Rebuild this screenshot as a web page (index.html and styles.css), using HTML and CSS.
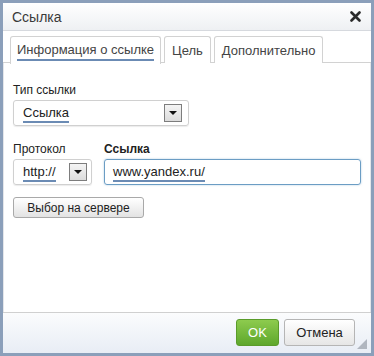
FILE: index.html
```html
<!DOCTYPE html>
<html>
<head>
<meta charset="utf-8">
<link rel="stylesheet" href="styles.css">
</head>
<body>
<div class="dialog">
  <div class="titlebar">
    <span class="title">Ссылка</span>
    <svg class="close" width="11" height="11" viewBox="0 0 11 11"><path d="M1.5 1.5L9.5 9.5M9.5 1.5L1.5 9.5" stroke="#2b2b2b" stroke-width="2.6" stroke-linecap="round"/></svg>
  </div>
  <div class="tabs">
    <div class="tab active"><span class="u">Информация о ссылке</span></div>
    <div class="tab">Цель</div>
    <div class="tab">Дополнительно</div>
  </div>
  <div class="content">
    <div class="field">
      <div class="label">Тип ссылки</div>
      <div class="select wide"><span class="u">Ссылка</span><span class="arrow"></span></div>
    </div>
    <div class="row">
      <div class="field">
        <div class="label">Протокол</div>
        <div class="select proto"><span class="u">http://</span><span class="arrow"></span></div>
      </div>
      <div class="field grow">
        <div class="label bold">Ссылка</div>
        <div class="input"><span class="u">www.yandex.ru/</span></div>
      </div>
    </div>
    <div class="btn">Выбор на сервере</div>
  </div>
  <div class="footer">
    <div class="ok">OK</div>
    <div class="cancel">Отмена</div>
    <span class="grip"></span>
  </div>
</div>
</body>
</html>
```
FILE: styles.css
```css
* { box-sizing: border-box; }
html, body { margin: 0; padding: 0; background: #fff; }
body { font-family: "Liberation Sans", Arial, sans-serif; color: #222; }
.dialog {
  width: 374px; height: 356px;
  border: 3px solid #8b9fba;
  display: flex; flex-direction: column;
  background: #fff;
}
.titlebar {
  height: 28px;
  display: flex; align-items: center; justify-content: space-between;
  padding: 0 10px 0 9px;
  background: linear-gradient(#ffffff, #eef0f3);
  border-bottom: 1px solid #d6d9de;
}
.title { font-size: 14px; color: #3a3a3a; }
.close { display: block; }
.tabs {
  display: flex; gap: 3px;
  padding: 5px 0 0 7px;
  border-bottom: 1px solid #d2d2d2;
  height: 32px;
}
.tab {
  height: 27px;
  border: 1px solid #d2d2d2; border-bottom: none;
  border-radius: 3px 3px 0 0;
  padding: 0 7px;
  font-size: 13px; color: #444;
  display: flex; align-items: center;
  background: #fff;
}
.tab.active { margin-bottom: -1px; height: 28px; padding: 0 6px; }
.u { border-bottom: 2px solid #6b8bb4; line-height: 15px; padding-bottom: 1px; }
.tab.active .u { padding-bottom: 2px; margin-top: 2px; }
.content {
  flex: 1;
  padding: 20px 9px 0 9px;
  border-left: 1px solid #e4e6ea;
  border-right: 1px solid #e4e6ea;
}
.label { font-size: 12px; color: #222; margin-bottom: 3px; }
.label.bold { font-weight: bold; }
.select {
  height: 26px;
  border: 1px solid #d0d0d0; border-radius: 3px;
  box-shadow: 0 1px 1px rgba(0,0,0,0.08);
  display: flex; align-items: center; justify-content: space-between;
  padding: 0 6px 0 9px;
  font-size: 13px;
}
.select.wide { width: 176px; }
.select.proto { width: 79px; padding-right: 4px; }
.select .u { margin-top: 2px; }
.arrow {
  width: 18px; height: 18px;
  border: 1px solid #7d7d7d;
  background: linear-gradient(#f4f4f4, #dcdcdc);
  position: relative;
}
.arrow::after {
  content: ""; position: absolute; left: 4px; top: 6px;
  border-left: 4px solid transparent; border-right: 4px solid transparent;
  border-top: 4px solid #111;
}
.row { display: flex; gap: 12px; margin-top: 16px; }
.grow { flex: 1; }
.input {
  height: 26px;
  border: 1px solid #6b9dc4; border-radius: 3px;
  box-shadow: 0 0 2px rgba(110,160,200,0.6);
  display: flex; align-items: center;
  padding: 0 8px;
  font-size: 13px;
}
.input .u { margin-top: 2px; }
.btn {
  display: inline-flex; align-items: center;
  margin-top: 12px;
  height: 21px; width: 131px;
  justify-content: center;
  border: 1px solid #a9a9a9; border-radius: 3px;
  background: linear-gradient(#ffffff, #e3e3e3);
  font-size: 12px; color: #222;
}
.footer {
  height: 41px;
  border-top: 1px solid #d0d0d0;
  background: linear-gradient(#fbfcfd, #e8edf5);
  display: flex; align-items: center; justify-content: flex-end;
  gap: 5px;
  padding: 0 16px 2px 0;
  position: relative;
}
.ok {
  width: 43px; height: 27px;
  border: 1px solid #5a9b2a; border-radius: 3px;
  background: linear-gradient(#8dcb4e, #5ea72c);
  color: #fff; font-size: 13px;
  display: flex; align-items: center; justify-content: center;
}
.cancel {
  width: 71px; height: 27px;
  border: 1px solid #b5b5b5; border-radius: 3px;
  background: linear-gradient(#ffffff, #e6e6e6);
  color: #222; font-size: 13px;
  display: flex; align-items: center; justify-content: center;
}
.grip {
  position: absolute; right: 4px; bottom: 4px;
  width: 0; height: 0;
  border-left: 10px solid transparent;
  border-bottom: 10px solid #b0b6bf;
}
```
